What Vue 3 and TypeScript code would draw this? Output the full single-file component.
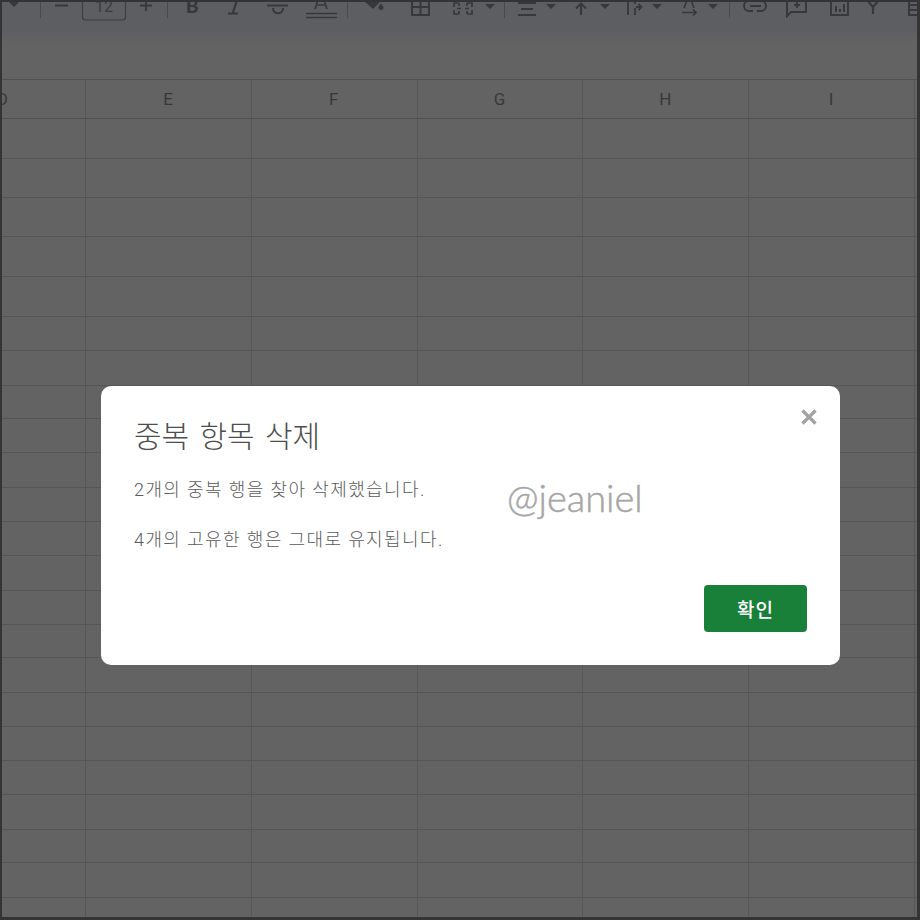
<script setup lang="ts">
const columns = ["D", "E", "F", "G", "H", "I", "J"];
const rowHeights = [40, 39, 39, 40, 40, 34, 35, 33, 34, 35, 34, 34, 35, 34, 33, 35, 34, 34, 34, 35, 33, 35, 40];
</script>

<template>
  <div class="sheet">
    <div class="top">
      <svg class="toolbar" width="916" height="32" viewBox="2 2 916 32" fill="none" stroke="#37383b" stroke-width="2">
        <g fill="#37383b" stroke="none">
          <path d="M9 2h10l-5 5zM485 4h10l-5 5zM546 4h10l-5 5zM600 4h10l-5 5zM652 4h10l-5 5zM708 4h10l-5 5z" />
          <path d="M365 2h15l-6 6q-1 1-2 0zM381 3.500c1.500 2 2.500 3 2.500 4a2.500 2.500 0 0 1-5 0c0-1 1-2 2.500-4z" />
        </g>
        <g stroke="#4a4b4e" stroke-width="1">
          <path d="M40.500 2v16M167.500 2v16M347.500 2v16M504.500 2v16M729.500 2v16" />
        </g>
        <path d="M55 5.500h13M146 0v11M140 5.500h12" />
        <rect x="82.500" y="-6" width="43" height="26" rx="3" stroke="#3c3d40" stroke-width="1.200" />
        <text x="104" y="12" class="tool-num" text-anchor="middle">12</text>
        <text x="192.500" y="13" class="tool-b" text-anchor="middle">B</text>
        <path d="M228 13.500h10M232.500 14l4.500-14" stroke-width="2.200" />
        <path d="M267 5.500h21M273 8c0 7 10 7 10 0" />
        <path d="M306 13.500h31M306 17.500h31" stroke-width="1.500" />
        <path d="M315 9l3-9M327 9l-3-9M316.500 5h9" stroke-width="1.700" />
        <path d="M412 0v15h17V0M420.500 0v15M412 7h17" />
        <path d="M459 3h-5v4M454 10v4h5M459 3v3M459 11v3M467 3h5v4M472 10v4h-5M467 3v3M467 11v3M457 8.500h4M465 8.500h4" stroke-width="1.700" />
        <path d="M518 3h18M521 9h12M518 15h18" />
        <path d="M581 15V4M576 8.500l5-5 5 5" />
        <path d="M628 0v15M635 0v4M635 8v7M636 7h5M638.500 4l3 3-3 3" stroke-width="1.800" />
        <path d="M684 8l3-8M694 8l-3-8M682 12.500h14M693 9.500l3 3-3 3" stroke-width="1.700" />
        <path d="M751 1h-2a5 5 0 0 0 0 10h4M759 1h2a5 5 0 0 1 0 10h-4M750 6h11" stroke-width="1.900" />
        <path d="M787 0v16l4-4h15V0M797 2v6M794 5h6" />
        <path d="M831 0v15h17V0M836 6v6M840 9v3M844 4v8" />
        <path d="M867 0l6 7v7M879 0l-6 7" stroke-width="2.200" />
        <path d="M909 0v15h8M909 5h8M909 10h8" />
      </svg>
    </div>

    <div class="header">
      <div v-for="col in columns" :key="col" class="cell head-cell">{{ col }}</div>
    </div>
    <div v-for="(h, i) in rowHeights" :key="i" class="row" :style="{ height: h + 'px' }">
      <div v-for="col in columns" :key="col" class="cell"></div>
    </div>

    <div class="backdrop">
      <div class="dialog">
        <svg class="close" width="16" height="16" viewBox="0 0 16 16" stroke="#a2a2a2" stroke-width="3.200">
          <path d="M1.500 1.500l13 13M14.500 1.500l-13 13" />
        </svg>
        <span class="watermark">@jeaniel</span>
        <h2 class="title">중복 항목 삭제</h2>
        <p class="message">2개의 중복 행을 찾아 삭제했습니다.</p>
        <p class="message">4개의 고유한 행은 그대로 유지됩니다.</p>
        <div class="actions">
          <button class="ok">확인</button>
        </div>
      </div>
    </div>
  </div>
</template>

<style>
html,
body {
  margin: 0;
  background: #636363;
}
</style>

<style scoped>
.sheet {
  position: relative;
  width: 920px;
  height: 920px;
  box-sizing: border-box;
  border: 2px solid #343434;
  border-right-width: 3px;
  border-bottom-width: 3px;
  overflow: hidden;
  background: #636363;
  font-family: Roboto, "Noto Sans CJK KR", sans-serif;
}

.top {
  height: 77px;
  background: linear-gradient(#5d5e62 0, #5d5e62 26px, #636363 42px);
}

.toolbar {
  display: block;
}

.tool-num {
  font: 400 16px Roboto, sans-serif;
  fill: #3a3b3e;
  stroke: none;
}

.tool-b {
  font: 700 20px Roboto, sans-serif;
  fill: #37383b;
  stroke: none;
}

.header,
.row {
  display: flex;
  margin-left: -81.6px;
  border-bottom: 1px solid #565656;
  box-sizing: border-box;
}

.header {
  height: 40px;
  border-top: 1px solid #505050;
  border-bottom-color: #505050;
}

.cell {
  flex: 0 0 165.75px;
  box-sizing: border-box;
  border-right: 1px solid #575757;
}

.head-cell {
  display: flex;
  align-items: center;
  justify-content: center;
  padding-right: 1px;
  font: 400 17px Roboto, sans-serif;
  color: #38383a;
}

.backdrop {
  position: absolute;
  left: 99px;
  top: 384px;
}

.dialog {
  position: relative;
  width: 739px;
  height: 279px;
  box-sizing: border-box;
  padding: 29px 33px 33px;
  display: flex;
  flex-direction: column;
  background: #fff;
  border-radius: 10px;
}

.close {
  position: absolute;
  top: 23px;
  right: 23px;
}

.watermark {
  position: absolute;
  left: 406px;
  top: 88px;
  font: 300 38px/46px Lato, sans-serif;
  -webkit-text-stroke: 0.5px #a6a6a6;
  color: #a6a6a6;
}

.title {
  margin: 0 0 19px;
  font-size: 30px;
  line-height: 44px;
  font-weight: 300;
  word-spacing: 3px;
  color: #4e4e4e;
}

.message {
  margin: 0 0 26px;
  font-size: 18px;
  line-height: 24px;
  font-weight: 300;
  letter-spacing: 1.4px;
  color: #5a5a5a;
}

.actions {
  margin-top: auto;
  display: flex;
  justify-content: flex-end;
}

.ok {
  width: 103px;
  height: 47px;
  padding: 0;
  border: 0;
  border-radius: 4px;
  background: #188038;
  color: #fff;
  font-family: inherit;
  font-size: 19px;
  font-weight: 500;
  letter-spacing: 1px;
}
</style>
